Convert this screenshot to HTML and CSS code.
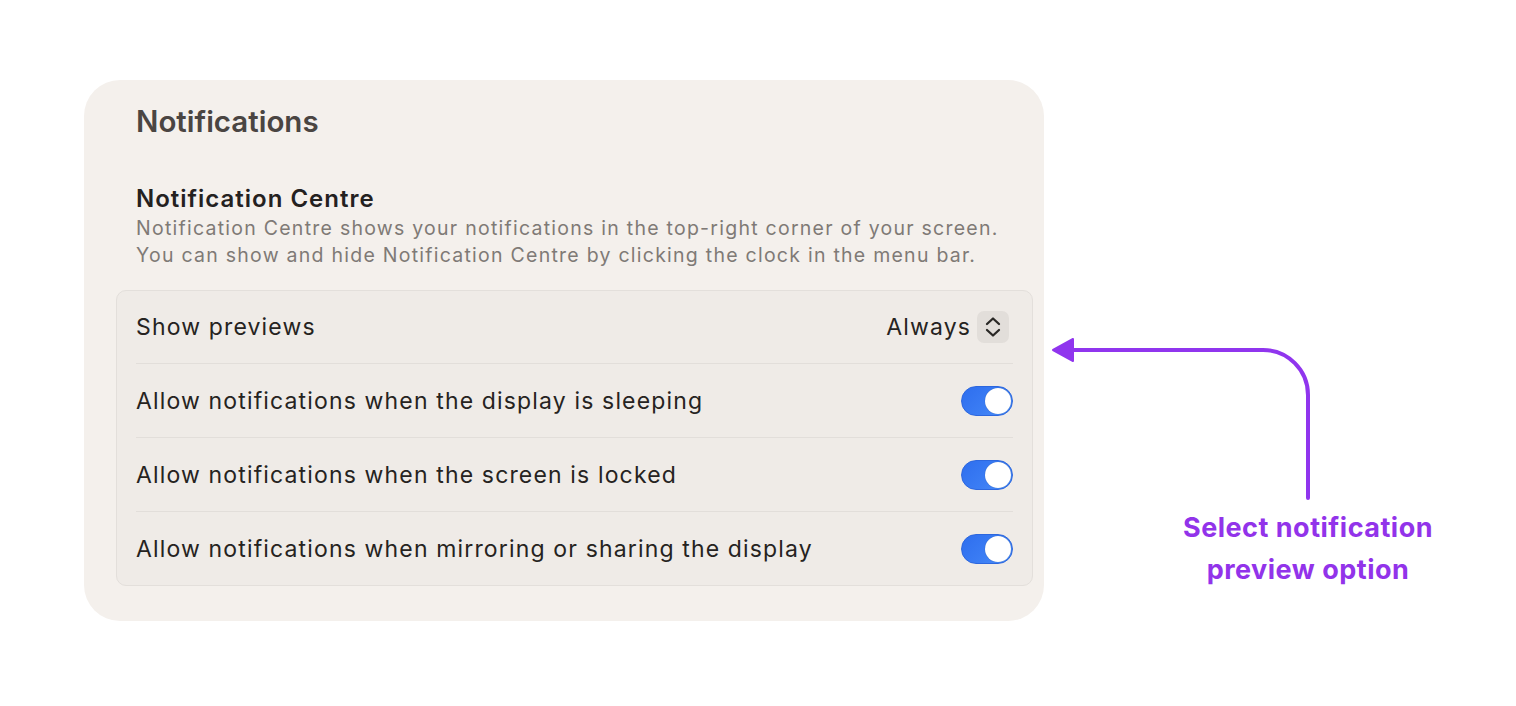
FILE: index.html
```html
<!DOCTYPE html>
<html lang="en">
<head>
    <meta charset="UTF-8">
    <meta name="viewport" content="width=device-width, initial-scale=1.0">
    <title>Notifications</title>
    <link rel="stylesheet" href="styles.css">
</head>
<body>
    <div class="page">
        <!-- Settings Card -->
        <div class="card">
            <h1 class="card-title">Notifications</h1>

            <h2 class="section-title">Notification Centre</h2>
            <p class="section-text">Notification Centre shows your notifications in the top-right corner of your screen.<br>You can show and hide Notification Centre by clicking the clock in the menu bar.</p>

            <div class="group">
                <div class="row first">
                    <span class="row-label">Show previews</span>
                    <div class="picker">
                        <span class="picker-value">Always</span>
                        <span class="stepper">
                            <svg width="18" height="24" viewBox="0 0 18 24">
                                <path d="M3 9 L9 3.5 L15 9" fill="none" stroke="#2a2826" stroke-width="2.3" stroke-linecap="round" stroke-linejoin="round"/>
                                <path d="M3 15 L9 20.5 L15 15" fill="none" stroke="#2a2826" stroke-width="2.3" stroke-linecap="round" stroke-linejoin="round"/>
                            </svg>
                        </span>
                    </div>
                </div>
                <div class="row">
                    <span class="row-label">Allow notifications when the display is sleeping</span>
                    <span class="toggle"><span class="knob"></span></span>
                </div>
                <div class="row">
                    <span class="row-label">Allow notifications when the screen is locked</span>
                    <span class="toggle"><span class="knob"></span></span>
                </div>
                <div class="row">
                    <span class="row-label">Allow notifications when mirroring or sharing the display</span>
                    <span class="toggle"><span class="knob"></span></span>
                </div>
            </div>
        </div>

        <!-- Annotation -->
        <div class="annotation">
            <svg class="arrow" width="270" height="172" viewBox="0 0 270 172">
                <path d="M18 20 H211 A45 45 0 0 1 256 65 V168" fill="none" stroke="#9035ee" stroke-width="4" stroke-linecap="round"/>
                <path d="M1 20 L21 9 L21 31 Z" fill="#9035ee" stroke="#9035ee" stroke-width="2" stroke-linejoin="round"/>
            </svg>
            <div class="annotation-text">Select notification<br>preview option</div>
        </div>
    </div>
</body>
</html>
```

FILE: styles.css
```css
/* Page */
body {
    margin: 0;
    background: #ffffff;
    font-family: Inter, "Liberation Sans", sans-serif;
}

.page {
    display: flex;
    align-items: flex-start;
    padding: 80px 0 0 84px;
}

/* Settings Card */
.card {
    width: 960px;
    box-sizing: border-box;
    background: #f4f0ec;
    border-radius: 36px;
    padding: 23px 11px 35px 32px;
}

.card-title {
    margin: 0 0 0 20px;
    font-size: 29.5px;
    line-height: 36px;
    font-weight: 600;
    color: #4a4542;
}

.section-title {
    margin: 45px 0 0 20px;
    font-size: 24px;
    line-height: 30px;
    font-weight: 600;
    letter-spacing: 1px;
    color: #24211f;
}

.section-text {
    margin: 1px 0 0 20px;
    font-size: 19.5px;
    line-height: 27px;
    letter-spacing: 1.25px;
    color: #7f7a76;
}

/* Grouped rows */
.group {
    margin-top: 21px;
    background: #efebe7;
    border: 1px solid #e3dfdb;
    border-radius: 10px;
    padding: 0 19px;
}

.row {
    display: flex;
    align-items: center;
    justify-content: space-between;
    height: 73px;
    border-top: 1px solid #e2deda;
}

.row.first {
    height: 72px;
    border-top: none;
}

.row-label {
    font-size: 23px;
    letter-spacing: 1.15px;
    color: #262321;
}

/* Picker */
.picker {
    display: flex;
    align-items: center;
    gap: 6px;
    margin-right: 4px;
}

.picker-value {
    font-size: 23px;
    letter-spacing: 1.15px;
    color: #262321;
}

.stepper {
    width: 32px;
    height: 32px;
    border-radius: 7px;
    background: #e2deda;
    display: flex;
    align-items: center;
    justify-content: center;
}

/* Toggle */
.toggle {
    width: 52px;
    height: 30px;
    box-sizing: border-box;
    border-radius: 15px;
    background: linear-gradient(135deg, #2e6eee 0%, #3b7df4 55%, #4b8ff8 100%);
    border: 1px solid #2d67de;
    display: flex;
    align-items: center;
    justify-content: flex-end;
    padding-right: 1px;
}

.knob {
    width: 26px;
    height: 26px;
    border-radius: 50%;
    background: #ffffff;
    box-shadow: 0 0 1px rgba(0, 0, 0, 0.3);
}

/* Annotation */
.annotation {
    margin-left: 8px;
    margin-top: 250px;
    display: flex;
    flex-direction: column;
}

.arrow {
    display: block;
}

.annotation-text {
    width: 300px;
    margin: 5px 0 0 106px;
    text-align: center;
    font-size: 27px;
    line-height: 42px;
    font-weight: 700;
    letter-spacing: 0.5px;
    color: #9233ea;
}
```
